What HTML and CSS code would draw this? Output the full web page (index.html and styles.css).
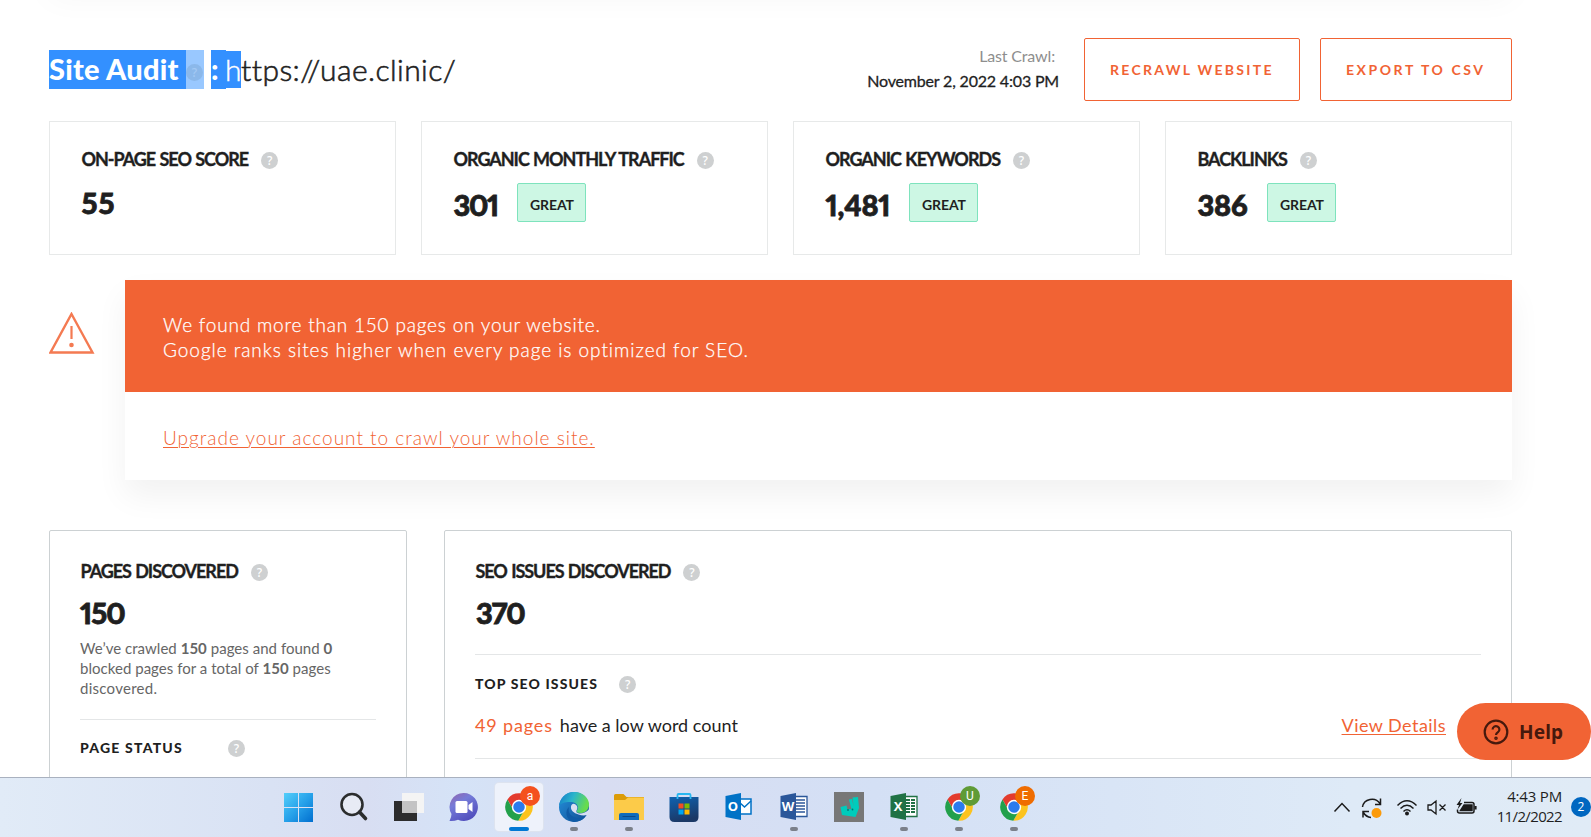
FILE: index.html
```html
<!DOCTYPE html>
<html lang="en">
<head>
<meta charset="utf-8">
<title>Site Audit</title>
<link rel="stylesheet" href="styles.css">
</head>
<body>
<svg class="defs" aria-hidden="true">
  <symbol id="chrome" viewBox="0 0 48 48">
    <path fill="#e33b2e" d="M24 14H43.6A22 22 0 0 0 5.54 12.03L15.34 29A10 10 0 0 1 24 14Z"/>
    <path fill="#fcc31e" transform="rotate(120 24 24)" d="M24 14H43.6A22 22 0 0 0 5.54 12.03L15.34 29A10 10 0 0 1 24 14Z"/>
    <path fill="#22a04b" transform="rotate(240 24 24)" d="M24 14H43.6A22 22 0 0 0 5.54 12.03L15.34 29A10 10 0 0 1 24 14Z"/>
    <circle cx="24" cy="24" r="11.500" fill="#fff"/><circle cx="24" cy="24" r="9.200" fill="#2a7bee"/>
  </symbol>
</svg>
<div class="screen">
  <main class="content">
    <div class="top-shadow"></div>
    <header class="header">
      <h1 class="title"><span class="sel sel-name">Site Audit</span><span class="sel-icon"><i class="q">?</i></span><span class="sel sel-colon">:</span><span class="sel sel-h">h</span><span class="url">ttps://uae.clinic/</span></h1>
      <div class="crawl"><span class="crawl-label">Last Crawl:</span><span class="crawl-date">November 2, 2022 4:03 PM</span></div>
      <button class="btn btn-recrawl">RECRAWL WEBSITE</button>
      <button class="btn btn-export">EXPORT TO CSV</button>
    </header>
    <section class="cards">
      <div class="card"><div class="label label-score"><span>ON-PAGE SEO SCORE</span><i class="q">?</i></div><div class="stat plain"><span class="num num-score">55</span></div></div>
      <div class="card"><div class="label label-traffic"><span>ORGANIC MONTHLY TRAFFIC</span><i class="q">?</i></div><div class="stat"><span class="num num-traffic">301</span><span class="great">GREAT</span></div></div>
      <div class="card"><div class="label label-keywords"><span>ORGANIC KEYWORDS</span><i class="q">?</i></div><div class="stat"><span class="num num-keywords">1,481</span><span class="great">GREAT</span></div></div>
      <div class="card"><div class="label label-links"><span>BACKLINKS</span><i class="q">?</i></div><div class="stat"><span class="num num-links">386</span><span class="great">GREAT</span></div></div>
    </section>
    <section class="notice">
      <svg class="warn" viewBox="0 0 46 42"><path d="M22.500 2 43.500 40.500H1.500Z" fill="none" stroke="#f47a52" stroke-width="2.4"/><path d="M22.500 14V27" stroke="#f47a52" stroke-width="2.2"/><circle cx="22.500" cy="33" r="2.300" fill="#f47a52"/></svg>
      <div class="notice-box">
        <div class="notice-head"><p class="line-found">We found more than 150 pages on your website.</p><p class="line-google">Google ranks sites higher when every page is optimized for SEO.</p></div>
        <div class="notice-body"><a>Upgrade your account to crawl your whole site.</a></div>
      </div>
    </section>
    <section class="panels">
      <div class="panel panel-pages">
        <div class="label label-pages"><span>PAGES DISCOVERED</span><i class="q">?</i></div>
        <div class="big big-pages">150</div>
        <div class="desc"><p>We’ve crawled <b>150</b> pages and found <b>0</b></p><p>blocked pages for a total of <b>150</b> pages</p><p class="desc-last">discovered.</p></div>
        <div class="sub sub-status"><span>PAGE STATUS</span><i class="q">?</i></div>
      </div>
      <div class="panel panel-issues">
        <div class="label label-issues"><span>SEO ISSUES DISCOVERED</span><i class="q">?</i></div>
        <div class="big big-issues">370</div>
        <div class="sub sub-issues"><span>TOP SEO ISSUES</span><i class="q">?</i></div>
        <div class="issue"><span class="issue-count">49 pages</span><span class="issue-text">have a low word count</span><a class="details">View Details</a></div>
      </div>
    </section>
  </main>
  <div class="help"><svg viewBox="0 0 26 26"><circle cx="13" cy="13" r="11.300"/><path d="M9.600 10.500a3.400 3.400 0 1 1 5.400 2.700c-1.400 1-2 1.500-2 2.900"/><circle cx="13" cy="19.200" r=".7"/></svg><span>Help</span></div>
  <footer class="taskbar">
    <div class="apps">
      <div class="app"><svg viewBox="0 0 30 30"><defs><linearGradient id="win" x1="0" y1="0" x2="30" y2="30" gradientUnits="userSpaceOnUse"><stop stop-color="#55d0fb"/><stop offset=".5" stop-color="#27a2ea"/><stop offset="1" stop-color="#006dce"/></linearGradient></defs><path fill="url(#win)" d="M0 1h14v14H0zM15 1h14v14H15zM0 16h14v14H0zM15 16h14v14H15z"/></svg></div>
      <div class="app"><svg viewBox="0 0 30 30"><circle cx="13" cy="12.500" r="10.500" fill="#e7ebf5" stroke="#2b2d2e" stroke-width="2.600"/><path d="m20.500 20 6 6.500" stroke="#2b2d2e" stroke-width="3.600" stroke-linecap="round"/></svg></div>
      <div class="app"><svg viewBox="0 0 30 30"><path fill="#2c2c2d" d="M0 9h23v20H0z"/><path fill="#f4f4f4" d="M8 1h22v20H8z"/><path fill="#c3c3c4" d="M8 9h15v12H8z"/></svg></div>
      <div class="app"><svg viewBox="0 0 30 30"><defs><linearGradient id="chat" x1="0" y1="0" x2=".6" y2="1"><stop stop-color="#9364ac"/><stop offset=".4" stop-color="#757bd8"/><stop offset="1" stop-color="#514fbd"/></linearGradient></defs><path fill="url(#chat)" d="M15 1a14 14 0 1 1-6 26.700Q5 29.500.500 29 2.500 25 2.500 22A14 14 0 0 1 15 1Z"/><rect x="6.500" y="9" width="12" height="12" rx="1.500" fill="#fff"/><path fill="#fff" d="m19.500 13 4-3v10l-4-3z"/></svg></div>
      <div class="app active"><svg viewBox="0 0 48 48"><use href="#chrome"/></svg><span class="badge b-red">a</span></div>
      <div class="app open"><svg viewBox="0 0 30 30"><defs><linearGradient id="edge-top" x1="0" y1="0" x2="1" y2=".3"><stop stop-color="#1278c9"/><stop offset=".5" stop-color="#2bb5cb"/><stop offset="1" stop-color="#67dc4d"/></linearGradient><linearGradient id="edge-base" x1="0" y1="0" x2="1" y2="1"><stop stop-color="#2392df"/><stop offset="1" stop-color="#124b8f"/></linearGradient></defs><circle cx="15" cy="15" r="15" fill="url(#edge-base)"/><path fill="#0f5ba6" d="M10 15c-2 7 4 12 13 11q3-.5 4.500-2.500Q23 30 15 30C6 28 6 18 10 15Z"/><path fill="url(#edge-top)" d="M0 14C1 6 7 0 15 0c9 0 15 6 15 12.500 0 6-4.500 8.500-8.500 8.500-3 0-4.500-1-4-2 3-3 1-8.500-4.500-9C7 9.500 1.500 11 0 14Z"/><path fill="#d9e0f2" d="M17.500 18.500Q16.500 21 20.500 21.400 26 21.500 30.500 17V22.500L28 23Q24 24 19.500 22.500C14 21 11.500 18 12 14.500 12.500 12 14.500 11 16.500 12.500 19 14.500 18.500 16.500 17.500 18.500Z"/></svg></div>
      <div class="app open"><svg viewBox="0 0 30 30"><path fill="#dc9c08" d="M0 3.500Q0 2 1.500 2H9.500L12.500 5H30V12H0Z"/><path fill="#fccb49" d="M0 8H11L14 5.500H30V28H0Z"/><path fill="#0f6cbd" d="M5 28V23q0-2 2-2H23q2 0 2 2V28Z"/><path d="M8.500 24.500H21.500" stroke="#0b4a8a"/></svg></div>
      <div class="app"><svg viewBox="0 0 30 30"><defs><linearGradient id="store" x1="0" y1="0" x2=".3" y2="1"><stop stop-color="#0f62b0"/><stop offset="1" stop-color="#1b3866"/></linearGradient></defs><path d="M8.500 8V3Q8.500 2 9.500 2H20.500Q21.500 2 21.500 3V8" fill="none" stroke="#28b7f0" stroke-width="1.800"/><path fill="url(#store)" d="M.500 5h29V25q0 5-5 5H5.500q-5 0-5-5Z"/><path d="M8.500 5V7M21.500 5V7" stroke="#28b7f0" stroke-width="1.800"/><path fill="#f05023" d="M9.500 11.500h5v5h-5z"/><path fill="#7fba00" d="M15.500 11.500h5v5h-5z"/><path fill="#00a4ef" d="M9.500 17.500h5v5h-5z"/><path fill="#ffb900" d="M15.500 17.500h5v5h-5z"/></svg></div>
      <div class="app"><svg viewBox="0 0 30 30"><path fill="#fff" stroke="#0072c6" stroke-width="1.500" d="M14 7h13v15H14z"/><path d="m15 10 5.500 5L27 9" fill="none" stroke="#0072c6" stroke-width="1.500"/><path fill="#0072c6" d="M1.500 4 17 1v27L1.500 25Z"/></svg><span class="letter">O</span></div>
      <div class="app open"><svg viewBox="0 0 30 30"><path fill="#fff" stroke="#2b579a" stroke-width="1.300" d="M14 4.500h14v20H14z"/><path d="M17 8h9M17 11h9M17 14h9M17 17h9M17 20h9" stroke="#2b579a" stroke-width="1.300"/><path fill="#2b579a" d="M1.500 4 17 1v27L1.500 25Z"/></svg><span class="letter">W</span></div>
      <div class="app"><svg viewBox="0 0 30 30"><path fill="#777" d="M0 0h30v30H0z"/><path fill="#00ccbc" d="m18.500 5.500 5.500-.5 1 11-3.500 9L8 23l-1.500-8 6-1.500.8 3.500h4L15 7.500l3-.5 1.500 7Z"/><circle cx="14" cy="18" r=".9" fill="#077"/><circle cx="18.500" cy="17.500" r=".9" fill="#077"/></svg></div>
      <div class="app open"><svg viewBox="0 0 30 30"><path fill="#fff" stroke="#207245" stroke-width="1.300" d="M14 4.500h14v20H14z"/><path d="M17 8h9M17 11h9M17 14h9M17 17h9M17 20h9" stroke="#207245" stroke-width="1.800" stroke-dasharray="4 1"/><path fill="#207245" d="M1.500 4 17 1v27L1.500 25Z"/></svg><span class="letter">X</span></div>
      <div class="app open"><svg viewBox="0 0 48 48"><use href="#chrome"/></svg><span class="badge b-green">U</span></div>
      <div class="app open"><svg viewBox="0 0 48 48"><use href="#chrome"/></svg><span class="badge b-orange">E</span></div>
    </div>
    <div class="tray">
      <svg class="tray-up" viewBox="0 0 18 20"><path d="m1.500 13.500 7.500-8 7.500 8"/></svg>
      <svg class="tray-sync" viewBox="0 0 22 22"><path d="M1.500 10A9.500 9 0 0 1 19 6.500M19.500 1.500V7.500H14M2 20.500V14.500H8M2 15Q5 20 10 20.500"/><circle cx="15.500" cy="16" r="5" fill="#fb9a0a" stroke="none"/></svg>
      <svg class="tray-wifi" viewBox="0 0 22 20"><path d="M1.500 7.500Q11-2 20.500 7.500M4.500 10.500Q11 4 17.500 10.500M7.500 13.500Q11 10 14.500 13.500"/><circle cx="11" cy="15.500" r="2" fill="#1b1b1b" stroke="none"/></svg>
      <svg class="tray-vol" viewBox="0 0 20 20"><path d="M1 7H4L9 3V16L4 12H1ZM12.500 6.500l6 6M18.500 6.500l-6 6"/></svg>
      <svg class="tray-bat" viewBox="0 0 21 20"><path d="M8 4.500H16Q18 4.500 18 6.500V13Q18 15 16 15H3.500Q1.500 15 1.500 13V11.500"/><path d="M8 7h8v5.500H4.500z" fill="#1b1b1b"/><path d="M19.500 8v3.500" stroke-width="2.200"/><path d="M5.500 0 .500 7H3L1.500 11.500 6.500 5H4Z" fill="#1b1b1b" stroke="none"/></svg>
      <div class="clock"><span class="time">4:43 PM</span><span class="date">11/2/2022</span></div>
      <span class="count">2</span>
    </div>
  </footer>
</div>
</body>
</html>
```

FILE: styles.css
```css
* { box-sizing: border-box; margin: 0; padding: 0; }
body { width: 1591px; height: 837px; overflow: hidden; background: #fff; color: #1f1f1f; font-family: Lato, "Open Sans", sans-serif; }
.defs { position: absolute; width: 0; height: 0; }
.screen { height: 837px; display: flex; flex-direction: column; position: relative; white-space: nowrap; }
.content { flex: 1; min-height: 0; overflow: hidden; padding: 0 79px 0 49px; }
.top-shadow { height: 30px; margin: -32px 0 20px; box-shadow: 0 0 32px rgba(0,0,0,.04); }
.q { display: inline-flex; flex: none; align-items: center; justify-content: center; width: 17px; height: 17px; border-radius: 50%; background: #ced0d1; color: #fff; font: 500 12px/17px "Noto Sans", sans-serif; letter-spacing: 0; }

/* Header */
.header { display: flex; height: 83px; padding-top: 20px; }
.title { display: flex; align-items: flex-start; font-size: 29px; font-weight: 900; padding-top: 12px; line-height: 37px; flex: 1; }
.sel { background: #3390ff; color: #fff; height: 39px; }
.sel-name { width: 137px; letter-spacing: .25px; }
.sel-icon { width: 18px; height: 39px; background: #99c8ff; display: flex; align-items: center; margin-right: 7px; padding-top: 5px; }
.sel-icon .q { background: #8bb8ea; color: #a3c9f5; }
.sel-colon { width: 15px; }
.sel-h { width: 15px; height: 37px; margin-top: 1px; line-height: 36px; font-weight: 300; font-size: 30px; -webkit-text-stroke: .4px; text-indent: -1px; }
.url { font-weight: 300; font-size: 30px; line-height: 38px; letter-spacing: .43px; -webkit-text-stroke: .6px; }
.crawl { display: flex; flex-direction: column; align-items: flex-end; font-size: 16px; line-height: 25px; padding: 5px 0 0; margin-right: 25px; }
.crawl-label { color: #8e8e8e; margin-right: 4px; letter-spacing: -.15px; }
.crawl-date { letter-spacing: -.18px; -webkit-text-stroke: .3px; }
.btn { height: 63px; border: 1px solid #f16334; border-radius: 2px; background: #fff; color: #f16334; font: 700 14px Lato, sans-serif; text-align: left; padding-left: 25px; }
.btn-recrawl { width: 216px; margin-right: 20px; letter-spacing: 2.3px; }
.btn-export { width: 192px; letter-spacing: 2.55px; }

/* Metric cards */
.cards { display: grid; grid-template-columns: repeat(4, 1fr); gap: 25px; margin-top: 20px; }
.card { height: 134px; border: 1px solid #e7e9e9; padding: 24px 32px 24px 31.5px; }
.label { display: flex; align-items: center; gap: 13px; height: 26px; font-size: 18px; font-weight: 700; line-height: 26px; word-spacing: 1px; -webkit-text-stroke: .35px; }
.label .q { margin-top: 3px; -webkit-text-stroke: 0; }
.label-score { letter-spacing: -1.03px; }
.label-traffic { letter-spacing: -1.03px; }
.label-keywords { letter-spacing: -1px; }
.label-links { letter-spacing: -1.05px; }
.label-pages { letter-spacing: -1.05px; }
.label-issues { letter-spacing: -1.05px; }
.stat { display: flex; align-items: center; height: 39px; margin-top: 11px; font-size: 29px; font-weight: 900; line-height: 39px; font-variant-numeric: proportional-nums; }
.num { margin-top: 4px; -webkit-text-stroke: .8px; }
.plain .num { margin-top: 0; }
.num-score { letter-spacing: 1px; }
.num-traffic { width: 63.5px; letter-spacing: -1.3px; }
.num-keywords { width: 83.5px; letter-spacing: -.16px; }
.num-links { width: 69.5px; letter-spacing: -.2px; }
.great { width: 69px; height: 39px; border: 1px solid #7ee3bd; border-radius: 2px; background: #cdf7e4; font-size: 14px; font-weight: 700; line-height: 42px; padding-left: 12px; letter-spacing: -.09px; }

/* Crawl limit notice */
.notice { display: flex; margin-top: 25px; height: 200px; }
.warn { width: 46px; height: 42px; margin: 32px 30px 0 0; flex: none; }
.notice-box { flex: 1; box-shadow: 0 16px 30px rgba(0,0,0,.055); }
.notice-head { height: 112px; background: #f16334; color: #fff; padding: 32px 38px; font-size: 19px; line-height: 25px; font-weight: 300; -webkit-text-stroke: .25px; }
.line-found { letter-spacing: .81px; }
.line-google { letter-spacing: .96px; }
.notice-body { height: 88px; background: #fff; padding: 33px 38px; line-height: 26px; font-size: 19px; font-weight: 300; color: #f16334; letter-spacing: 1px; }
a { text-decoration: underline; text-underline-offset: 2px; text-decoration-thickness: 1px; }

/* Detail panels */
.panels { display: flex; gap: 37px; margin-top: 50px; }
.panel { border: 1px solid #ccd1d3; border-radius: 2px; height: 300px; padding: 27px 30px; background: #fff; }
.panel-pages { width: 358px; }
.panel-issues { flex: 1; }
.panel .label { padding-left: .5px; }
.big { font-size: 29px; font-weight: 900; line-height: 40px; margin-top: 9px; font-variant-numeric: proportional-nums; -webkit-text-stroke: .8px; }
.big-pages { letter-spacing: -1px; }
.big-issues { letter-spacing: -1.1px; padding-left: 1px; }
.desc { font-size: 15px; line-height: 20px; color: #666; margin-top: 5px; padding-bottom: 21px; border-bottom: 1px solid #e4e6e7; letter-spacing: .03px; }
.desc-last { letter-spacing: .27px; }
.sub { display: flex; align-items: center; font-size: 14px; font-weight: 900; }
.sub-status { height: 55px; gap: 45px; letter-spacing: 1.2px; }
.sub-issues { height: 58px; gap: 21px; letter-spacing: 1.13px; border-top: 1px solid #e4e6e7; margin-top: 21px; }
.sub span { margin-top: -1px; }
.sub .q { margin-top: 2px; }
.issue { display: flex; height: 47px; line-height: 26px; font-size: 18px; border-bottom: 1px solid #e4e6e7; }
.issue-count, .details { color: #f16334; }
.issue-count { letter-spacing: .85px; }
.issue-text { margin-left: 7px; }
.details { margin: 0 35px 0 auto; letter-spacing: .45px; }

/* Floating help button */
.help { position: absolute; right: 0; top: 703px; width: 134px; height: 57px; border-radius: 29px; background: #f16334; color: #46190d; display: flex; align-items: center; padding-left: 26px; gap: 10px; font: bold 19px "Noto Sans", sans-serif; letter-spacing: .15px; }
.help svg { width: 26px; height: 26px; fill: none; stroke: #46190d; stroke-width: 2.2; }

/* Taskbar */
.taskbar { height: 60px; flex: none; border-top: 1px solid #a9b1bf; display: flex; background: linear-gradient(90deg, #e1ebf7 0, #d9e2f4 17%, #d8def2 23%, #d5e3f7 29%, #d8ddf2 38%, #d4e0f5 55%, #deeaf7 85%, #e0ebf6 100%); justify-content: space-between; }
.apps { display: flex; gap: 7px; padding: 5px 0 0 275px; }
.app { position: relative; width: 48px; height: 48px; display: flex; justify-content: center; padding-top: 9px; border-radius: 4px; }
.app > svg { width: 30px; height: 30px; }
.active { background: #eef2fb; box-shadow: 0 0 0 1px #dde3ef; }
.active::after, .open::after { content: ""; position: absolute; top: 44px; width: 8px; height: 4px; border-radius: 2px; background: #7b808a; }
.active::after { width: 20px; background: #0078d4; }
.badge { position: absolute; left: 25px; top: 3px; width: 20px; height: 20px; border-radius: 50%; color: #fff; font: 12px/20px Roboto, sans-serif; text-align: center; }
.b-red { background: #f4511e; }
.b-green { background: #5f9b36; }
.b-orange { background: #ef6c00; }
.letter { position: absolute; left: 10px; width: 16px; top: 16px; text-align: center; color: #fff; font: bold 13px/15px "Open Sans", sans-serif; }
.tray { display: flex; align-items: center; }
.tray svg { fill: none; stroke: #1b1b1b; stroke-width: 1.5; flex: none; }
.tray .tray-up { width: 18px; height: 20px; margin-right: 10px; }
.tray .tray-sync { width: 22px; height: 22px; margin-right: 13px; }
.tray .tray-wifi { width: 22px; height: 20px; margin-right: 9px; }
.tray .tray-vol { width: 20px; height: 20px; margin-right: 9px; stroke-width: 1.3; }
.tray .tray-bat { width: 21px; height: 20px; margin-right: 20px; }
.clock { width: 65px; display: flex; flex-direction: column; align-items: flex-end; font: 15px/20px "Open Sans", sans-serif; padding-bottom: 4px; }
.time { letter-spacing: -.18px; }
.date { letter-spacing: -.63px; }
.count { width: 20px; height: 20px; border-radius: 50%; background: #0067c0; color: #fff; font: 12px/20px "Open Sans", sans-serif; text-align: center; margin-left: 9px; margin-bottom: 1px; }
```
